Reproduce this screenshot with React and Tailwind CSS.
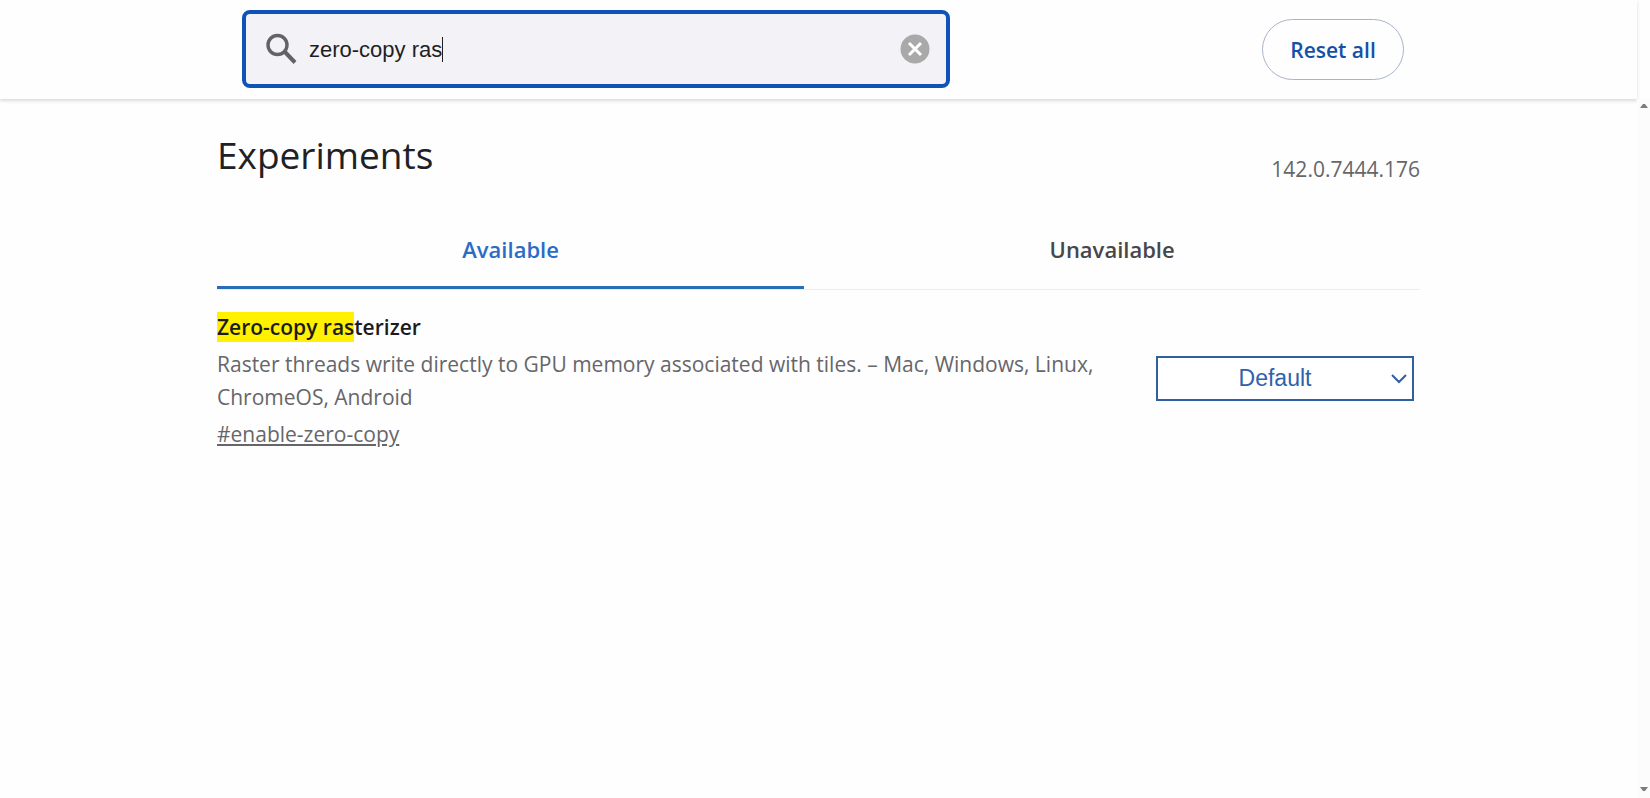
import { useState } from 'react';

const tabs = [
  { id: 'available', label: 'Available' },
  { id: 'unavailable', label: 'Unavailable' },
];

function SearchIcon() {
  return (
    <svg viewBox="0 0 32 32" className="w-8 h-8 shrink-0" fill="none" stroke="#626366" aria-hidden="true">
      <circle cx="11.5" cy="12" r="9.5" strokeWidth="3.4" />
      <path d="M18.5 18.5 29 29.5" strokeWidth="4" />
    </svg>
  );
}

function ClearIcon() {
  return (
    <svg viewBox="0 0 30 30" className="w-[30px] h-[30px]" aria-hidden="true">
      <circle cx="15" cy="15" r="14.5" fill="#a9a9aa" />
      <path d="M9 9 21 21M21 9 9 21" stroke="#fff" strokeWidth="3" />
    </svg>
  );
}

function Header({ query, setQuery }) {
  return (
    <header className="mr-[13px] bg-[#fefefe] shadow-[0_2px_3px_#dcdadd]">
      <div className="max-w-[1203px] mx-auto pl-[25px] pr-4 pt-[10px] pb-[11px] flex items-center justify-between">
        <div className="w-[708px] h-[78px] pl-5 pr-4 flex items-center gap-[11px] rounded-lg border-4 border-[#0f53b8] bg-[#f3f3f7]">
          <SearchIcon />
          <div className="flex-1 flex items-center">
            <input
              type="text"
              aria-label="Search flags"
              value={query}
              onChange={(e) => setQuery(e.target.value)}
              className="field-sizing-content h-[33px] bg-transparent outline-none caret-transparent text-[22px] leading-[33px] text-[#1f1f22]"
            />
            <span className="w-px h-[25px] bg-[#1f1f22]" />
          </div>
          <button type="button" aria-label="Clear search" onClick={() => setQuery('')}>
            <ClearIcon />
          </button>
        </div>
        <button
          type="button"
          className="w-[142px] h-[61px] pt-1 rounded-full border border-[#a9b4cc] font-['Open_Sans',sans-serif] text-[21px] font-semibold text-[#1550a8]"
        >
          Reset all
        </button>
      </div>
    </header>
  );
}

function Tabs({ selected, setSelected }) {
  return (
    <div role="tablist" className="mt-7 flex border-b border-[#ececf1]">
      {tabs.map((tab) => (
        <button
          key={tab.id}
          type="button"
          role="tab"
          aria-selected={selected === tab.id}
          onClick={() => setSelected(tab.id)}
          className={
            selected === tab.id
              ? 'flex-auto h-[75px] pb-[2px] text-[22px] font-semibold text-[#2a6cc6] border-b-[3px] border-[#2a6cb8] rounded-t-xs'
              : 'flex-auto h-[75px] pb-[2px] text-[22px] font-semibold text-[#47474a] border-b-[3px] border-transparent'
          }
        >
          {tab.label}
        </button>
      ))}
    </div>
  );
}

function Experiment() {
  return (
    <div className="pt-[21px] pr-[6px] flex items-center justify-between">
      <div className="w-[893px]">
        <h2 className="h-[33px] leading-[33px] text-[21px] font-semibold text-[#1b1b1e]">
          <mark className="py-px bg-[#fff100] text-inherit">Zero-copy ras</mark>terizer
        </h2>
        <p className="mt-1 leading-[33px] text-[21px] text-[#66666a]">
          Raster threads write directly to GPU memory associated with tiles. – Mac, Windows, Linux, ChromeOS, Android
        </p>
        <a href="#enable-zero-copy" className="block w-fit mt-1 leading-[33px] text-[21px] text-[#66666a] underline">
          #enable-zero-copy
        </a>
      </div>
      <div className="relative w-[258px] mb-[6px]">
        <select
          aria-label="Zero-copy rasterizer"
          className="w-full h-[45px] pr-5 appearance-none border-2 border-[#31609f] bg-white text-center font-['Liberation_Sans',sans-serif] text-[23px] text-[#2f62ac]"
        >
          <option>Default</option>
          <option>Enabled</option>
          <option>Disabled</option>
        </select>
        <svg viewBox="0 0 16 10" className="absolute right-[7px] top-[18px] w-4 h-[10px] pointer-events-none" fill="none" stroke="#2f5fa0" strokeWidth="2">
          <path d="M1 1 8 8 15 1" />
        </svg>
      </div>
    </div>
  );
}

function Scrollbar() {
  return (
    <div className="w-[13px] shrink-0 pt-1 pb-[6px] flex flex-col items-end justify-between bg-[#fdfcfd]" aria-hidden="true">
      <svg viewBox="0 0 8 5" className="w-2 h-[5px] mr-[2px]" fill="#7d7d80"><path d="M0 5 3 1H5L8 5Z" /></svg>
      <svg viewBox="0 0 8 5" className="w-2 h-[5px] mr-[2px]" fill="#7d7d80"><path d="M0 0 3 4H5L8 0Z" /></svg>
    </div>
  );
}

export default function App() {
  const [query, setQuery] = useState('zero-copy ras');
  const [selected, setSelected] = useState('available');

  return (
    <div className="min-h-screen flex flex-col bg-[#fefefe] font-['Liberation_Sans',sans-serif]">
      <Header query={query} setQuery={setQuery} />
      <div className="flex-1 flex">
        <main className="flex-1 font-['Open_Sans',sans-serif]">
          <div className="max-w-[1203px] mx-auto pt-[30px]">
            <div className="flex items-start justify-between">
              <h1 className="text-[37px] leading-[52px] text-[#202124]">Experiments</h1>
              <span className="pt-6 leading-[33px] text-[21px] text-[#66666a]">142.0.7444.176</span>
            </div>
            <Tabs selected={selected} setSelected={setSelected} />
            <Experiment />
          </div>
        </main>
        <Scrollbar />
      </div>
    </div>
  );
}
